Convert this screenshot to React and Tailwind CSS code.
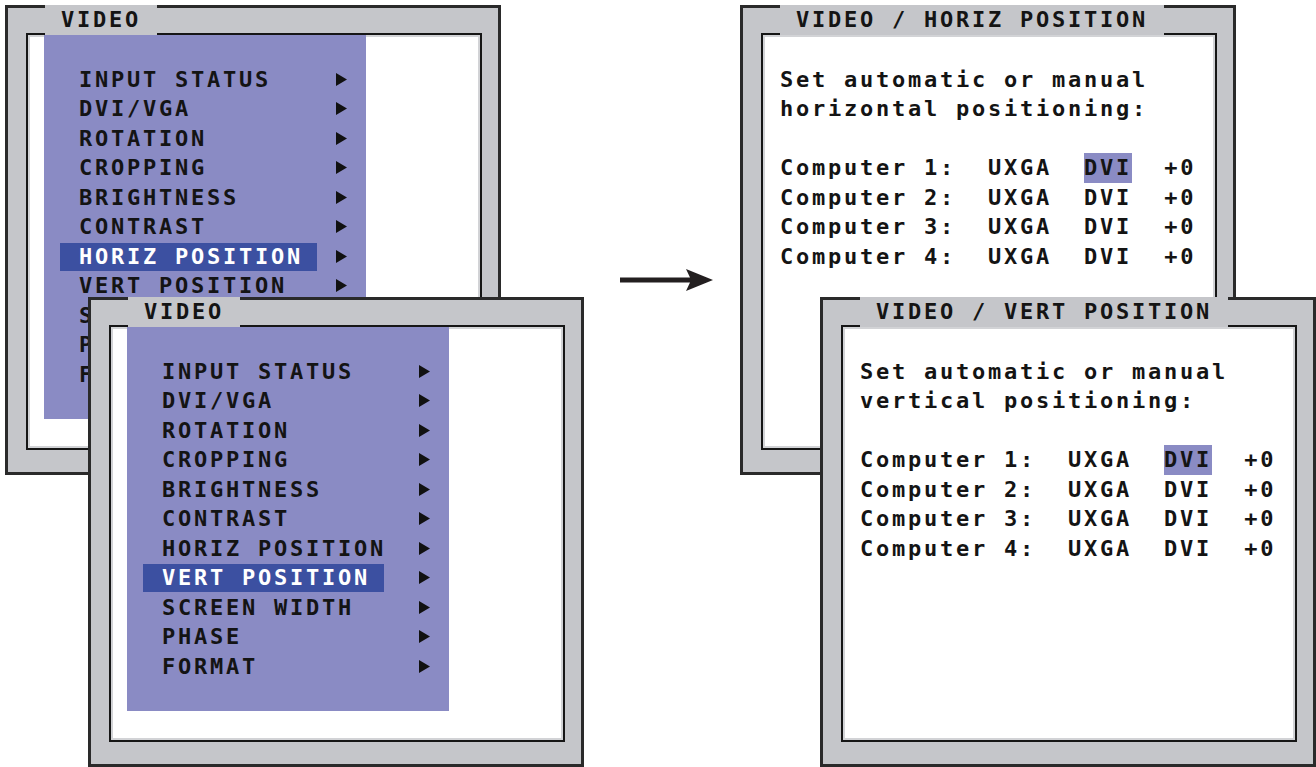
import React from 'react';

const MENU_ITEMS = [
  'INPUT STATUS',
  'DVI/VGA',
  'ROTATION',
  'CROPPING',
  'BRIGHTNESS',
  'CONTRAST',
  'HORIZ POSITION',
  'VERT POSITION',
  'SCREEN WIDTH',
  'PHASE',
  'FORMAT',
];

const COMPUTERS = [1, 2, 3, 4];

const MenuArrow = () => (
  <svg width="11" height="13" viewBox="0 0 11 13" className="shrink-0">
    <polygon points="0,0 11,6.5 0,13" fill="#111" />
  </svg>
);

const Frame = ({ className, title, children }) => (
  <div
    className={`absolute h-[470px] w-[496px] border-[3px] border-[#2a2a2a] bg-[#c5c6ca] pb-[22px] pl-[18px] pr-[16px] pt-[25px] ${className}`}
  >
    <div className="h-full border-2 border-[#161616] bg-white shadow-[inset_0_0_0_2px_#d2d3d6]">
      {children}
    </div>
    <div className="absolute left-[37px] top-[-3px] flex h-[30px] items-center bg-[#c5c6ca] whitespace-pre">
      {` ${title} `}
    </div>
  </div>
);

const VideoMenu = ({ selected }) => (
  <div className="ml-[16px] w-[322px] bg-[#8a8bc4] py-[29.5px]">
    {MENU_ITEMS.map((item) => (
      <div key={item} className="flex h-[29.5px] items-center pl-[16px]">
        <div className="w-[276px]">
          <span
            className={`inline-block pl-[19px] pr-[14px] leading-[28px] ${
              item === selected ? 'bg-[#3c50a1] text-white' : ''
            }`}
          >
            {item}
          </span>
        </div>
        <MenuArrow />
      </div>
    ))}
  </div>
);

const PositionPanel = ({ kind }) => (
  <div className="whitespace-pre pl-[17px] pt-[29.5px]">
    <div>Set automatic or manual</div>
    <div>{`${kind} positioning:`}</div>
    <div>{' '}</div>
    {COMPUTERS.map((n) => (
      <div key={n}>
        {`Computer ${n}:  UXGA  `}
        <span className={`inline-block ${n === 1 ? 'bg-[#8a8bc4]' : ''}`}>DVI</span>
        {'  +0'}
      </div>
    ))}
  </div>
);

export default function App() {
  return (
    <div className="relative h-[767px] w-[1316px] overflow-hidden bg-white font-['DejaVu_Sans_Mono',monospace] text-[22px] font-bold leading-[29.5px] tracking-[2.76px] text-[#141414]">
      <Frame className="left-[5px] top-[5px]" title="VIDEO">
        <VideoMenu selected="HORIZ POSITION" />
      </Frame>
      <Frame className="left-[88px] top-[297px]" title="VIDEO">
        <VideoMenu selected="VERT POSITION" />
      </Frame>

      <svg
        width="94"
        height="22"
        viewBox="0 0 94 22"
        className="absolute left-[620px] top-[269px]"
      >
        <polygon points="0,8.5 70,8.5 66,0 93,11 66,22 70,13.5 0,13.5" fill="#231f20" />
      </svg>

      <Frame className="left-[740px] top-[5px]" title="VIDEO / HORIZ POSITION">
        <PositionPanel kind="horizontal" />
      </Frame>
      <Frame className="left-[820px] top-[297px]" title="VIDEO / VERT POSITION">
        <PositionPanel kind="vertical" />
      </Frame>
    </div>
  );
}
